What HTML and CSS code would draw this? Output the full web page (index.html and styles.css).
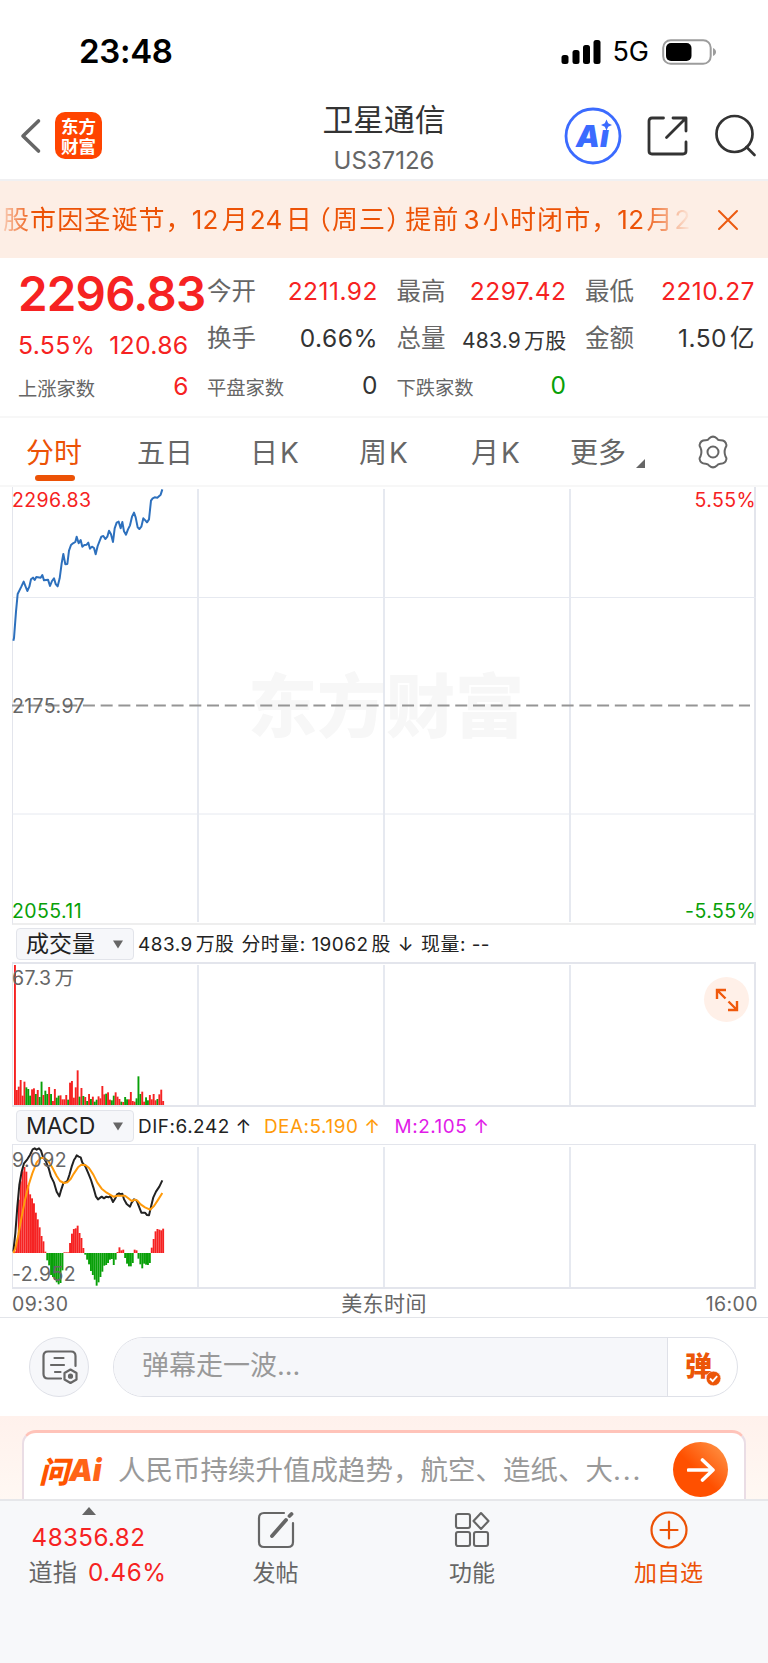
FILE: index.html
```html
<!DOCTYPE html>
<html lang="zh-CN">
<head>
<meta charset="utf-8">
<title>卫星通信 US37126</title>
<link rel="stylesheet" href="styles.css">
</head>
<body>
<div class="status">
  <span class="clock">23:48</span>
  <div class="status-right">
    <svg width="40" height="26" viewBox="0 0 40 26"><rect x="0.5" y="16" width="7" height="9" rx="2.5"/><rect x="11.500" y="11" width="7" height="14" rx="2.500"/><rect x="22" y="6" width="7" height="19" rx="2.500"/><rect x="32.500" y="1" width="7" height="24" rx="2.500"/></svg>
    <span class="net">5G</span>
    <svg width="55" height="26" viewBox="0 0 55 26"><rect x="1.200" y="1.200" width="47.500" height="23.600" rx="7.500" fill="none" stroke="#9c9c9c" stroke-width="2"/><rect x="4" y="4" width="25.500" height="18" rx="5"/><path d="M51 9c4 1.500 4 6.500 0 8z" fill="#9c9c9c"/></svg>
  </div>
</div>

<header class="header">
  <div class="head-left">
    <svg width="24" height="36" viewBox="0 0 24 36" class="line"><path d="M19.500 3 4 18l15.500 15" stroke="#666" stroke-width="3.600"/></svg>
    <div class="logo"><span>东方</span><span>财富</span></div>
  </div>
  <div class="head-title"><h1>卫星通信</h1><p>US37126</p></div>
  <div class="head-right">
    <svg width="58" height="58" viewBox="0 0 58 58"><circle cx="29" cy="29" r="27" fill="#fff" stroke="#3b6bff" stroke-width="2.800"/><text class="ai-mark" x="12" y="40">A<tspan x="36">ı</tspan></text><path d="m42.500 12.500 1.700 3.800 3.800 1.700-3.800 1.700-1.700 3.800-1.700-3.800-3.800-1.700 3.800-1.700z" fill="#3b6bff"/></svg>
    <svg width="42" height="42" viewBox="0 0 42 42" class="line"><path d="M16.500 3H5Q2 3 2 6v30q0 3 3 3h31q3 0 3-3V27M26 3h13v13M38.500 3.500 19.500 22.500" stroke="#333" stroke-width="2.800"/></svg>
    <svg width="44" height="44" viewBox="0 0 44 44" class="line"><circle cx="20.500" cy="20" r="18" stroke="#333" stroke-width="2.700"/><path d="m32.500 33 8 8" stroke="#333" stroke-width="2.700"/></svg>
  </div>
</header>

<div class="notice">
  <div class="notice-text">股市因圣诞节，<b class="first">12</b>月<b>24</b>日<i class="open-paren">（</i>周三<i class="close-paren">）</i>提前<b class="single">3</b>小时闭市，<b class="next">12</b>月<b>2</b></div>
  <svg width="22" height="22" viewBox="0 0 22 22" class="line"><path d="m2 2 18 18M20 2 2 20" stroke="#ec5a10" stroke-width="2"/></svg>
</div>

<section class="quote">
  <div class="quote-main">
    <div class="price">2296.83</div>
    <div class="change"><span>5.55%</span><span>120.86</span></div>
    <div class="cell small"><label>上涨家数</label><span class="up">6</span></div>
  </div>
  <div class="quote-grid">
    <div class="cell"><label>今开</label><span class="up">2211.92</span></div>
    <div class="cell"><label>最高</label><span class="up">2297.42</span></div>
    <div class="cell"><label>最低</label><span class="up">2210.27</span></div>
    <div class="cell"><label>换手</label><span>0.66%</span></div>
    <div class="cell"><label>总量</label><span class="compact">483.9<em>万股</em></span></div>
    <div class="cell"><label>金额</label><span>1.50<em>亿</em></span></div>
    <div class="cell small"><label>平盘家数</label><span>0</span></div>
    <div class="cell small"><label>下跌家数</label><span class="down">0</span></div>
  </div>
</section>

<nav class="tabs">
  <span class="tab active">分时</span><span class="tab">五日</span><span class="tab">日<em>K</em></span><span class="tab">周<em>K</em></span><span class="tab">月<em>K</em></span>
  <span class="tab more">更多<svg width="9" height="9" viewBox="0 0 9 9"><path d="M9 0v9H0z" fill="#666"/></svg></span>
  <svg class="gear line" width="34" height="34" viewBox="0 0 34 34"><path d="M13.300 3.200Q17 0 20.700 3.200q1.300 2.300 4 2.100 4.800 0 5.700 4.600.2 1.300-.9 2.800-1.800 4.300 0 8.600 1.100 1.500.9 2.800-.9 4.600-5.700 4.600-2.700-.2-4 2.100Q17 34 13.300 30.800q-1.300-2.300-4-2.100-4.800 0-5.700-4.600-.2-1.300.9-2.800 1.800-4.300 0-8.600-1.100-1.500-.9-2.800.9-4.600 5.700-4.600 2.700.2 4-2.100z" stroke="#666" stroke-width="2"/><circle cx="17" cy="17" r="5.500" stroke="#666" stroke-width="2"/></svg>
</nav>

<main class="charts">
  <div class="panel panel-price">
    <div class="watermark">东方财富</div>
    <svg class="plot" width="744" height="438" viewBox="12 487 744 438">
      <g class="grid"><path d="M12 597.500h744M12 814h744"/><path class="thick" d="M198 489v433M384 489v433M570 489v433"/></g>
      <path d="M12 705.500h738" stroke="#959595" stroke-width="2" stroke-dasharray="12 5.730"/>
      <polyline class="series" transform="translate(0 480) scale(.33333)" stroke="#2d70bd" points="40,482 42,474 48,395 53,342 64,320 71,305 82,333 88,320 93,298 99,293 104,300 109,291 122,293 127,285 132,301 144,299 150,318 156,303 162,295 167,312 173,319 179,295 185,250 190,222 196,253 202,252 207,212 213,195 219,190 226,186 230,170 236,190 242,180 247,200 253,195 260,194 265,188 270,206 276,200 282,204 287,223 293,198 304,170 310,168 316,177 322,170 327,152 333,163 339,186 344,145 350,128 356,125 362,145 367,126 372,154 378,164 384,148 390,136 396,110 402,98 407,112 413,142 418,147 424,140 430,115 436,121 441,127 447,118 453,62 458,55 464,52 472,53 482,44 487,28"/>
    </svg>
    <span class="tag tl up">2296.83</span><span class="tag tr up">5.55%</span>
    <span class="tag ml">2175.97</span>
    <span class="tag bl down">2055.11</span><span class="tag br down">-5.55%</span>
  </div>

  <div class="bar">
    <button class="picker"><span>成交量</span><svg width="10" height="9" viewBox="0 0 10 9"><path d="M0 .5h10L5 8.500z" fill="#666"/></svg></button>
    <div class="stats"><span>483.9<em>万股</em></span><span class="s1">分时量<u>:</u> 19062<em>股</em></span><span class="s2">↓</span><span class="s2">现量<u>:</u> --</span></div>
  </div>
  <div class="panel panel-volume">
    <svg class="plot" width="744" height="141" viewBox="12 964 744 141">
      <g class="grid"><path class="thick" d="M198 965v140M384 965v140M570 965v140"/></g>
      <g id="volume" transform="translate(0 900) scale(.33333)"></g>
    </svg>
    <span class="tag vol">67.3<em>万</em></span>
    <div class="expand"><svg width="24" height="24" viewBox="0 0 24 24"><path d="M2 11V2h9M2 2l8.500 8.500M22 13v9h-9M22 22l-8.500-8.500" fill="none" stroke="#f0590c" stroke-width="2.400"/></svg></div>
  </div>

  <div class="bar bar-macd">
    <button class="picker"><span class="latin">MACD</span><svg width="10" height="9" viewBox="0 0 10 9"><path d="M0 .5h10L5 8.500z" fill="#666"/></svg></button>
    <div class="stats macd-stats"><span>DIF:6.242 ↑</span><span class="dea">DEA:5.190 ↑</span><span class="mag">M:2.105 ↑</span></div>
  </div>
  <div class="panel panel-macd">
    <svg class="plot" width="744" height="142" viewBox="12 1145 744 142">
      <g class="grid"><path class="thick" d="M198 1147v140M384 1147v140M570 1147v140"/></g>
      <g transform="translate(0 1100) scale(.33333)">
        <g id="macd"></g>
        <polyline class="series" stroke="#222" points="40,455 46,400 52,320 58,255 65,215 72,190 82,178 90,165 98,148 104,145 110,149 117,145 123,152 128,168 138,185 146,205 153,230 162,248 170,275 178,289 184,268 190,250 202,243 208,225 215,200 222,180 226,174 230,166 236,170 242,172 247,188 256,199 265,220 273,240 280,262 288,290 294,298 305,290 312,295 319,290 326,292 331,288 339,306 346,295 351,283 357,280 362,283 367,281 372,298 380,312 390,320 395,308 402,298 410,302 417,320 424,338 435,338 441,345 447,346 453,320 460,292 468,275 478,260 487,241"/>
        <polyline class="series" stroke="#ff9a0a" points="40,459 46,445 55,405 65,350 75,300 85,258 97,220 110,187 122,174 131,173 145,183 158,205 170,228 180,243 192,249 202,247 212,237 222,220 234,202 244,194 256,195 267,204 280,224 292,248 305,266 320,278 340,290 352,287 362,287 375,287 385,295 395,303 405,299 412,302 422,313 435,322 450,329 462,318 475,298 487,279"/>
      </g>
    </svg>
    <span class="tag mtop">9.092</span><span class="tag mbot">-2.952</span>
  </div>
  <div class="axis"><span>09:30</span><span class="zone">美东时间</span><span>16:00</span></div>
</main>

<div class="danmu">
  <div class="round"><svg class="line" width="38" height="38" viewBox="0 0 38 38" stroke="#666" stroke-width="2.200"><path d="M34.500 17V7q0-4.500-4.500-4.500H7Q2.500 2.500 2.500 7v18q0 4.500 4.500 4.500h13M13.500 9h9M10 16h13M14 23h5.500"/><path d="m29.500 20.500 6 3.500v6.500l-6 3.500-6-3.500V24z"/><circle cx="29.500" cy="27.200" r="1.500" fill="#666"/></svg></div>
  <div class="pill">
    <div class="pill-input">弹幕走一波...</div>
    <div class="pill-btn"><span class="dan">弹</span><svg class="check" width="15" height="15" viewBox="0 0 15 15"><circle cx="7.500" cy="7.500" r="7.300" fill="#ec5608" stroke="#fff" stroke-width=".5"/><path d="m4 7.500 2.700 2.700 4.500-5" fill="none" stroke="#fff" stroke-width="1.800"/></svg></div>
  </div>
</div>

<section class="ask">
  <div class="ask-card">
    <div class="ask-logo"><span>问</span><span class="ask-ai">Ai</span></div>
    <div class="ask-text">人民币持续升值成趋势，航空、造纸、大<em>...</em></div>
    <div class="go"><svg class="line" width="28" height="26" viewBox="0 0 28 26"><path d="M1.500 13H26M15.500 3 26 13 15.500 23" stroke="#fff" stroke-width="3.600"/></svg></div>
  </div>
</section>

<footer class="footer">
  <div class="index">
    <svg width="14" height="8" viewBox="0 0 14 8"><path d="M7 0l7 8H0z" fill="#666"/></svg>
    <div class="up">48356.82</div>
    <div class="index-row"><span>道指</span><span class="up">0.46%</span></div>
  </div>
  <div class="action"><svg class="line" width="38" height="38" viewBox="0 0 38 38"><path d="M27 2H7Q2 2 2 7v24q0 5 5 5h24q5 0 5-5V12" stroke="#666" stroke-width="2.200"/><path d="M15 25 29 9M32.500 5 34.500 3" stroke="#666" stroke-width="3.800"/></svg><span>发帖</span></div>
  <div class="action"><svg class="line" width="38" height="38" viewBox="0 0 38 38" stroke="#666" stroke-width="2.100"><rect x="3" y="3" width="14" height="14" rx="2"/><rect x="3" y="21" width="14" height="14" rx="2"/><rect x="21" y="21" width="14" height="14" rx="2"/><path d="m28 2 7.500 8-7.500 8-7.500-8z"/></svg><span>功能</span></div>
  <div class="action add"><svg class="line" width="38" height="38" viewBox="0 0 38 38" stroke="#ec5206" stroke-width="2.200"><circle cx="19" cy="19" r="17.500"/><path d="M10.500 19h17M19 10.500v17"/></svg><span>加自选</span></div>
</footer>
<script src="charts.js"></script>
</body>
</html>
```
FILE: charts.js
```js
// Bar values; "g" marks a falling minute.
const volume = '420 45 55 75 28 70 53g 48g 28g 47 50 33g 45 24g 70g 30 43g 33g 54 33g 12 48 22g 28g 29 17 17 30 16g 67 72 22 53 104 25g 51 27g 24 12g 33 18g 25 10g 16g 26 20 57 32 34g 38 16 14g 28g 38 25 18 10g 9 24g 17g 17 39 12 10 20g 86g 33g 40 10 23g 14g 30 17 33 14 18g 32 46 12';
const macd = [5, 35, 160, 215, 245, 258, 244, 204, 176, 164, 149, 121, 101, 77, 51, 35, 4, -22, -37, -66, -72, -80, -88, -94, -90, -52, 2, 2, 2, 30, 58, 72, 74, 82, 60, 45, 15, -5, -20, -34, -54, -66, -80, -98, -88, -72, -56, -38, -36, -30, -20, -18, -36, -20, 3, 17, 8, 10, -15, -32, -40, -40, -30, 10, 8, -17, -34, -46, -32, -35, -36, -30, 16, 42, 65, 72, 70, 68, 73];
const red = '#f62222', green = '#08a008', step = 5.7;

function drawBars(id, bars, base) {
  document.getElementById(id).innerHTML = bars.map(([h, color], i) =>
    `<rect x="${42 + i * step}" y="${h < 0 ? base : base - h}" width="5.7" height="${Math.abs(h)}" fill="${color}"/>`).join('');
}
drawBars('volume', volume.split(' ').map(v => [parseInt(v), v.endsWith('g') ? green : red]), 615);
drawBars('macd', macd.map(h => [h, h < 0 ? green : red]), 459);
```
FILE: styles.css
```css
* { box-sizing: border-box; }
body { margin: 0; width: 768px; height: 1663px; overflow: hidden; background: #fff; color: #333; font-family: Inter, "Noto Sans CJK SC", sans-serif; line-height: 1; }
svg { display: block; flex: none; }
em, i, b, u { font-style: normal; font-weight: inherit; text-decoration: none; }
h1, p { margin: 0; font-weight: 400; }
.line { fill: none; stroke-linecap: round; stroke-linejoin: round; }
.up { color: #f62222 !important; }
.down { color: #08a008 !important; }

.status { height: 90px; padding: 13px 51px 0 79px; display: flex; align-items: center; justify-content: space-between; }
.clock { font-size: 33px; font-weight: 600; color: #000; letter-spacing: -.3px; }
.status-right { display: flex; align-items: center; color: #000; }
.net { font-size: 27px; margin: 0 13px 0 11px; }

.header { height: 91px; display: grid; grid-template-columns: 1fr auto 1fr; align-items: center; border-bottom: 2px solid #f0f0f2; }
.head-left { display: flex; align-items: center; gap: 12px; padding: 2px 0 0 19px; }
.logo { width: 47px; height: 47px; border-radius: 10px; background: #ff4400; color: #fff; display: flex; flex-direction: column; align-items: center; justify-content: center; font: 700 17.500px/19.500px "Noto Sans CJK SC", sans-serif; }
.head-title { text-align: center; padding-top: 6px; }
.head-title h1 { font-size: 30.800px; line-height: 38px; }
.head-title p { font-size: 24px; line-height: 28px; margin-top: 8px; color: #666; }
.head-right { display: flex; align-items: center; justify-content: flex-end; padding: 2px 10px 0 0; gap: 25px; }
.ai-mark { font: italic 900 30px Inter, sans-serif; fill: #3b6bff; }

.notice { height: 77px; background: #fdeee5; display: flex; align-items: center; justify-content: space-between; padding-right: 29px; color: #ec5206; }
.notice-text { width: 692px; padding-left: 3px; white-space: nowrap; overflow: hidden; font-size: 26px; letter-spacing: 1.100px; line-height: 40px; mask-image: linear-gradient(90deg, rgba(0,0,0,.15), #000 34px, #000 640px, transparent 692px); }
.notice-text b { letter-spacing: .3px; margin: 0 3px 0 1px; }
.notice-text .first { margin-left: -1px; }
.notice-text .single { margin: 0 3px 0 4px; }
.notice-text .next { margin: 0 2px 0 -1px; }
.open-paren { margin-left: -8px; }
.close-paren { margin-right: -8px; }

.quote { height: 160px; display: flex; border-bottom: 2px solid #f7f7f7; }
.quote-main { width: 207px; padding: 10px 0 0 18px; }
.price { font-size: 47.500px; line-height: 52px; font-weight: 600; color: #f62222; letter-spacing: -.8px; }
.change { display: flex; gap: 14px; color: #f62222; font-size: 24.800px; line-height: 30px; margin-top: 10px; letter-spacing: .3px; }
.quote-grid { flex: 1; display: grid; grid-template-columns: 171px 170px 170px; grid-template-rows: 47px 47px 48px; column-gap: 18.500px; padding-top: 10px; }
.cell { display: flex; align-items: center; justify-content: space-between; font-size: 24.500px; white-space: nowrap; }
.cell > span { letter-spacing: .5px; }
.cell label { color: #666; }
.cell.small label { font-size: 19.300px; padding-top: 6px; }
.cell.small > span { padding-bottom: 1px; }
.quote-main .cell { width: 171px; height: 48px; margin-top: 3px; }
.cell .compact { font-size: 21px; padding-top: 3px; letter-spacing: .2px; }
.cell em, .stats em, .tag em { margin-left: 3px; }

.tabs { height: 69px; display: grid; grid-template-columns: 111px 113px 109px 112px 99px 126px 34px; align-items: center; padding-left: 26px; font-size: 28px; color: #666; border-bottom: 2px solid #f7f7f7; white-space: nowrap; }
.tab { height: 67px; line-height: 70px; position: relative; }
.tab em { margin-left: 2px; }
.tab.active { color: #ec5206; }
.tab.active::after { content: ""; position: absolute; left: 9px; bottom: 4px; width: 40px; height: 6px; border-radius: 3px; background: #ec5206; }
.more { display: flex; }
.more svg { margin: 41px 0 0 10px; }

.charts { padding: 0 12px; }
.panel { position: relative; border: solid #e3e5ec; border-width: 0 2px 2px 1px; }
.panel-price { height: 438px; border-bottom-color: #eee; }
.panel-volume { height: 145px; border-top-width: 2px; }
.panel-macd { height: 145px; border-top-width: 1px; }
.plot { margin-left: -1px; overflow: visible; position: relative; }
.grid { fill: none; stroke: #e6e9f0; }
.grid .thick { stroke-width: 2; }
.series { fill: none; stroke-width: 6; stroke-linejoin: round; }
.watermark { position: absolute; left: 235px; top: 181px; font: 900 69px/69px "Noto Sans CJK SC", sans-serif; color: #f7f7f7; }
.tag { position: absolute; left: -1px; font-size: 19.500px; line-height: 22px; color: #666; letter-spacing: .4px; }
.tl, .tr { top: 2px; }
.tr, .br { left: auto; right: -2px; }
.ml { top: 208px; }
.bl, .br { bottom: 1px; }
.vol { top: 3px; }
.mtop { top: 4px; }
.mbot { bottom: 2px; }
.expand { position: absolute; right: 5px; top: 13px; width: 45px; height: 45px; border-radius: 50%; background: #fff0e8; display: grid; place-items: center; }

.bar { height: 37px; padding-left: 4px; display: flex; align-items: center; gap: 4px; }
.picker { width: 118px; height: 32px; border: 1.500px solid #e2e4ea; border-radius: 4px; background: #f6f7fa; padding: 1px 10px 0 9px; display: flex; align-items: center; justify-content: space-between; font: 23px/28px Inter, "Noto Sans CJK SC", sans-serif; color: #222; }
.stats { display: flex; font-size: 18.900px; line-height: 26px; color: #222; white-space: nowrap; padding-top: 3px; }
.stats span { letter-spacing: .5px; }
.macd-stats span { letter-spacing: .55px; }
.s1 { margin-left: 7px; }
.s2 { margin-left: 7px; }
.stats .dea { color: #ff9a0a; margin-left: 12px; }
.stats .mag { color: #e11be8; margin-left: 14px; }
.axis { height: 28px; padding-top: 3px; display: grid; grid-template-columns: 1fr auto 1fr; align-items: center; font-size: 19.500px; letter-spacing: .4px; color: #666; margin-right: -2px; }
.axis span:last-child { text-align: right; }
.axis .zone { font-size: 21px; margin-right: 2px; padding-bottom: 2px; }

.danmu { height: 99px; border-top: 1px solid #e3e5ea; display: flex; align-items: center; padding: 0 30px 0 29px; gap: 24px; }
.round { width: 60px; height: 60px; border-radius: 50%; background: #f6f7fa; border: 1px solid #dfe1e8; display: grid; place-items: center; padding: 2px 0 0 2px; }
.pill { flex: 1; height: 60px; border-radius: 30px; border: 1.500px solid #dfe1e8; overflow: hidden; display: flex; }
.pill-input { flex: 1; background: #f6f7fa; padding-left: 28px; font-size: 27px; line-height: 55px; color: #999; border-right: 1px solid #dfe1e8; }
.pill-btn { width: 69px; position: relative; padding-left: 17px; }
.dan { font: 900 27px/53px "Noto Sans CJK SC", sans-serif; color: #ec5608; }
.check { position: absolute; left: 38px; top: 33px; }

.ask { height: 83px; background: linear-gradient(#fff1ec, #fff8f3); padding: 14px 22px 0; overflow: hidden; }
.ask-card { height: 90px; border: 2px solid #eadde5; border-top: 3px solid #ffc3b9; border-radius: 14px; background: #fff; padding: 0 16px 12px 15px; display: flex; align-items: center; }
.ask-logo { width: 79px; display: flex; font: italic 900 30px/36px "Noto Sans CJK SC", sans-serif; color: #ff5500; }
.ask-ai { font-family: Inter, sans-serif; color: #ff6418; }
.ask-text { flex: 1; font-size: 27.500px; line-height: 36px; color: #999; white-space: nowrap; }
.ask-text em { letter-spacing: 1.800px; }
.go { width: 55px; height: 55px; border-radius: 50%; background: linear-gradient(45deg, #ff5000 45%, #ff9c4e); display: grid; place-items: center; }

.footer { height: 164px; background: #f7f8fa; border-top: 2px solid #e6e7ea; display: grid; grid-template-columns: 177px 197px 196px 197px; color: #666; }
.index { display: flex; flex-direction: column; align-items: center; padding-top: 6px; font-size: 24.200px; line-height: 28px; }
.index > .up { margin-top: 9px; letter-spacing: .4px; }
.index-row { display: flex; gap: 11px; line-height: 34px; margin: 4px 0 0 18px; }
.index-row .up { letter-spacing: .5px; }
.action { display: flex; flex-direction: column; align-items: center; padding-top: 10px; font-size: 23px; line-height: 34px; gap: 7px; }
.add { color: #ec5206; }
```
